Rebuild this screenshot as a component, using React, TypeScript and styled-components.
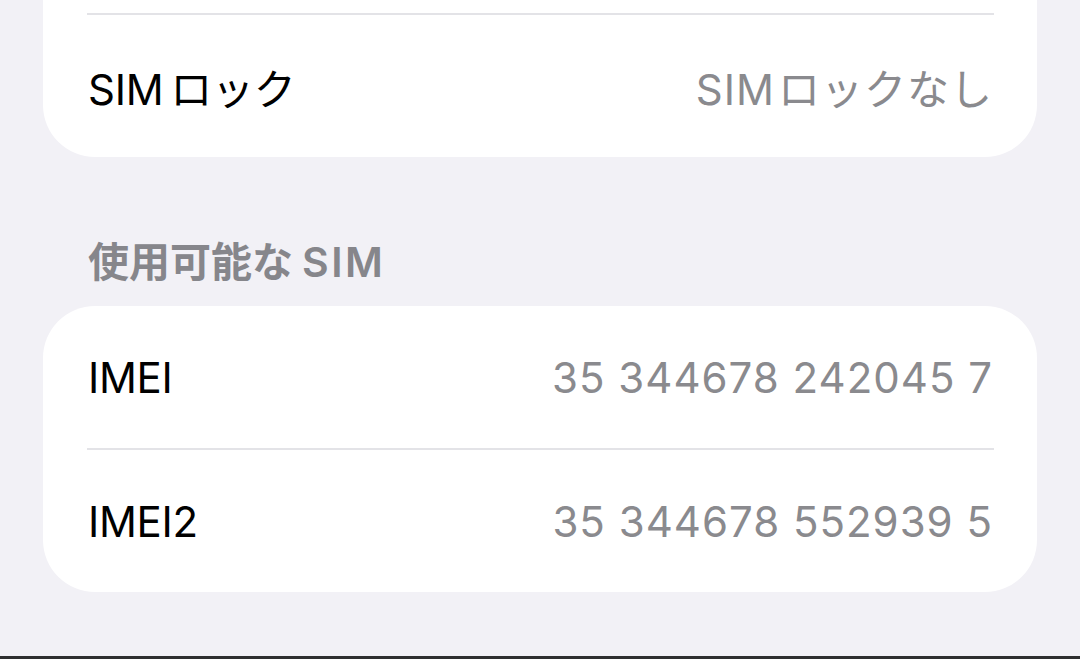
import React from 'react'
import styled, { createGlobalStyle } from 'styled-components'

const GlobalStyle = createGlobalStyle`
  html, body {
    margin: 0;
    padding: 0;
    background: #f2f1f6;
  }
  body {
    font-family: 'Inter', 'Noto Sans CJK JP', sans-serif;
    -webkit-font-smoothing: antialiased;
  }
`

const Screen = styled.div`
  height: 659px;
  display: flex;
  flex-direction: column;
  background: #f2f1f6;
  overflow: hidden;
`

interface CardProps {
  clipped?: boolean
}

const Card = styled.div<CardProps>`
  margin: 0 43px;
  background: #ffffff;
  border-radius: ${(props) => (props.clipped ? '0 0 52px 52px' : '52px')};
  padding-top: ${(props) => (props.clipped ? '13px' : '0')};
  display: flex;
  flex-direction: column;
`

const Divider = styled.div`
  height: 2px;
  margin: 0 43px 0 44px;
  background: #e3e3e7;
`

const Row = styled.div`
  height: 142px;
  padding: 0 44px 0 45px;
  display: flex;
  align-items: center;
  justify-content: space-between;
  font-size: 42px;
  letter-spacing: -0.3px;
`

const Label = styled.span`
  color: #000000;
`

const Value = styled.span`
  color: #8a8a8e;
  letter-spacing: 1px;
`

// iOS puts a little air between latin and kana
const Latin = styled.span<{ $after?: number; $before?: number }>`
  margin-right: ${(props) => props.$after ?? 0}px;
  margin-left: ${(props) => props.$before ?? 0}px;
`

const SectionHeader = styled.div`
  margin: 82px 0 20px;
  padding-left: 88px;
  font-size: 41px;
  line-height: 47px;
  font-weight: 600;
  color: #86868b;

  ${Latin} {
    letter-spacing: 2.5px;
  }
`

const BottomEdge = styled.div`
  margin-top: auto;
  height: 3px;
  background: #2e2e30;
`

const rows = [
  { label: 'IMEI', value: '35 344678 242045 7' },
  { label: 'IMEI2', value: '35 344678 552939 5' },
]

const App = () => (
  <>
    <GlobalStyle />
    <Screen>
      <Card clipped>
        <Divider />
        <Row>
          <Label>
            <Latin $after={7}>SIM</Latin>ロック
          </Label>
          <Value>
            <Latin $after={3}>SIM</Latin>ロックなし
          </Value>
        </Row>
      </Card>
      <SectionHeader>
        使用可能な<Latin $before={9}>SIM</Latin>
      </SectionHeader>
      <Card>
        {rows.map((r, i) => (
          <React.Fragment key={r.label}>
            {i > 0 && <Divider />}
            <Row>
              <Label>{r.label}</Label>
              <Value>{r.value}</Value>
            </Row>
          </React.Fragment>
        ))}
      </Card>
      <BottomEdge />
    </Screen>
  </>
)

export default App
